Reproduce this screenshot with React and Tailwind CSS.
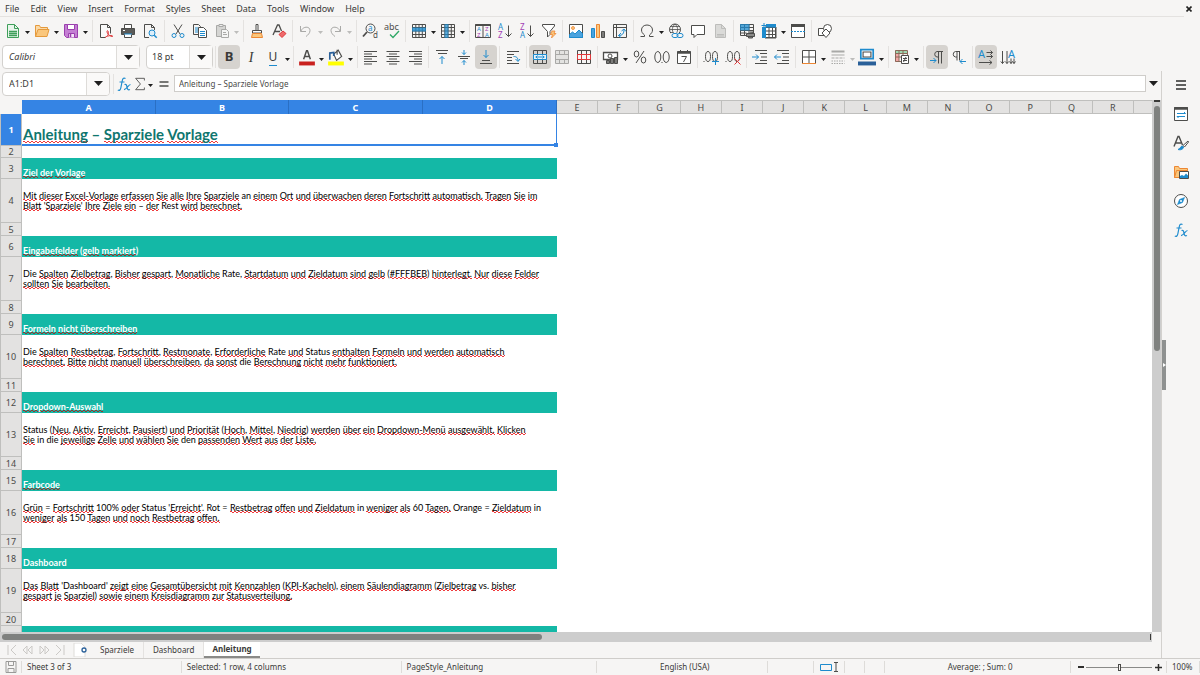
import React, { useState } from "react";

const DARK = "#4d4d4b";
const BLUE = "#1e8bcd";
const PURPLE = "#a33fb5";
const ORANGE = "#ed8733";
const RED = "#e0383a";
const GRAY = "#a9a9a7";

const Icon = ({ children, size = 16, stroke = DARK }) => (
  <svg
    width={size}
    height={size}
    viewBox="0 0 16 16"
    fill="none"
    stroke={stroke}
    strokeWidth="1"
    className="shrink-0 overflow-visible"
    aria-hidden="true"
  >
    {children}
  </svg>
);

const Glyph = ({ x, y, size, fill = DARK, children }) => (
  <text x={x} y={y} fontSize={size} fill={fill} stroke="none" fontFamily="Noto Sans, sans-serif">
    {children}
  </text>
);

const Caret = ({ color = "#1f1f1f", big }) => (
  <svg width={big ? 9 : 5} height={big ? 5 : 3} viewBox="0 0 10 6" preserveAspectRatio="none" aria-hidden="true">
    <path d="M0 0h10L5 6z" fill={color} />
  </svg>
);

const icons = {
  newDoc: (
    <Icon stroke="#3f9f5a">
      <path d="M2.5 1.5h7l4 4v9h-11z" fill="#e9f6ec" />
      <path d="M9.5 1.5v4h4" />
      <path d="M4 8.5h8M4 10.5h8M4 12.5h8" strokeWidth="1.3" />
    </Icon>
  ),
  open: (
    <Icon stroke="#e59a3c">
      <path d="M1.5 13.5v-11h4l1 2h7v2" fill="#fbd9a6" />
      <path d="M1.5 13.5l2.5-7h11l-2 7z" fill="#fac77d" />
    </Icon>
  ),
  save: (
    <Icon stroke="#9b3fae">
      <path d="M1.5 1.5h13v13h-11l-2-2z" fill="#c47fd3" />
      <path d="M4.5 1.5h7v5h-7z" fill="#fff" />
      <path d="M5.5 14.5v-4h6v4" fill="#f4e4f7" />
      <path d="M7.5 11v3" strokeWidth="1.5" />
    </Icon>
  ),
  pdf: (
    <Icon>
      <path d="M2.5 14.5v-13h7l3 3v6M2.5 14.5h5" fill="#fafafa" />
      <path d="M9.5 1.5v3h3" />
      <path d="M7 14.5c3-1.5 4-4 3-6.5-.7-1-1.5.3-.6 2 .9 1.7 3 3.5 5.1 3.5 1.2-.8-2-1.500-5.3-.2" stroke={RED} />
    </Icon>
  ),
  print: (
    <Icon>
      <path d="M4.5 5V1.5h7V5" fill="#fff" />
      <path d="M1.5 5.5h13v6h-13z" fill="#5a5a58" />
      <path d="M4 11.5h8" stroke={BLUE} strokeWidth="2" />
      <path d="M4.5 11.5v3h7v-3" fill="#fff" />
      <path d="M3 7.5h2" stroke="#fff" />
    </Icon>
  ),
  preview: (
    <Icon>
      <path d="M7 14.5H2.5v-13h7l3 3v2.500M9.5 1.5v3h3" />
      <circle cx="10" cy="10" r="3" stroke={BLUE} fill="#dceefa" />
      <path d="M12.2 12.2l2.5 2.5" stroke={BLUE} strokeWidth="1.5" />
    </Icon>
  ),
  cut: (
    <Icon>
      <path d="M4 1.5l6 9.5M12 1.5l-6 9.5" />
      <circle cx="4" cy="12.5" r="2" stroke={BLUE} />
      <circle cx="12" cy="12.5" r="2" stroke={BLUE} />
    </Icon>
  ),
  copy: (
    <Icon>
      <path d="M7 11.5H1.5v-10h5l2 2v1" />
      <path d="M3 5h3M3 7h3M3 9h3" stroke={BLUE} />
      <path d="M6.5 4.5h5l3 3v7h-8z" fill="#fff" />
      <path d="M8 8.5h5M8 10.5h5M8 12.5h5" stroke={BLUE} />
    </Icon>
  ),
  paste: (
    <Icon stroke={GRAY}>
      <path d="M2.5 2.5h9v11h-9z" fill="#d5d5d3" />
      <path d="M5 1.5h4v2H5z" fill="#eee" />
      <path d="M7.5 6.5h5l2 2v6h-7z" fill="#f5f5f4" />
      <path d="M9 9.5h3M9 11.5h4" />
    </Icon>
  ),
  brush: (
    <Icon>
      <path d="M7 1.5h2v6H7zM3.5 7.5h9v2.5h-9z" fill="#fff" />
      <path d="M3.5 10.5h9l1 4h-11z" fill="#fac77d" stroke={ORANGE} />
    </Icon>
  ),
  clear: (
    <Icon>
      <path d="M2 12L6.5 2h1.5L10.5 8M4 8.500h5" strokeWidth="1.3" />
      <path d="M8 11.5l4-3.5 3 2.5-4 4z" fill="#ee6a6c" stroke={RED} />
    </Icon>
  ),
  undo: (
    <Icon stroke={GRAY}>
      <path d="M2.5 3v5.5H8M3 8c2-5 9-5 9-.5 0 2.5-2 4.5-4 6" />
    </Icon>
  ),
  redo: (
    <Icon stroke={GRAY}>
      <path d="M13.5 3v5.5H8M13 8c-2-5-9-5-9-.5 0 2.5 2 4.5 4 6" />
    </Icon>
  ),
  find: (
    <Icon>
      <circle cx="8.5" cy="5.5" r="4.500" />
      <path d="M5 9l-4 4.5" strokeWidth="1.8" />
      <Glyph x="6" y="8" size="8" fill={BLUE}>a</Glyph>
      <Glyph x="11" y="15" size="8">d</Glyph>
    </Icon>
  ),
  spell: (
    <Icon>
      <Glyph x="0" y="7" size="9">abc</Glyph>
      <path d="M6 11.5l3 3 6-6.5" stroke="#2fa866" strokeWidth="1.3" />
    </Icon>
  ),
  row: (
    <Icon>
      <path d="M1.5 1.5h13v13h-13zM1.5 4.5h13M1.5 8h13M1.5 11.5h13M4.8 1.5v13M8 1.5v13M11.3 1.5v13" />
      <path d="M1 4.5h14v4H1z" fill={BLUE} stroke="none" opacity=".8" />
    </Icon>
  ),
  col: (
    <Icon>
      <path d="M1.5 1.5h13v13h-13zM1.5 4.5h13M1.5 8h13M1.5 11.5h13M4.8 1.5v13M8 1.5v13M11.3 1.5v13" />
      <path d="M4.5 1H8.500v14h-4z" fill={BLUE} stroke="none" opacity=".7" />
    </Icon>
  ),
  sort: (
    <Icon>
      <path d="M.5 1.5h15v13H.5zM8 1.5v13" />
      <path d="M.5 2h15" strokeWidth="2" />
      <Glyph x="2" y="8" size="6" fill={BLUE}>A</Glyph>
      <Glyph x="2" y="14" size="6" fill={PURPLE}>Z</Glyph>
      <Glyph x="10" y="8" size="6" fill={PURPLE}>Z</Glyph>
      <Glyph x="10" y="14" size="6" fill={BLUE}>A</Glyph>
    </Icon>
  ),
  sortAsc: (
    <Icon>
      <Glyph x="1" y="7" size="8" fill={BLUE}>A</Glyph>
      <Glyph x="1" y="15" size="8" fill={PURPLE}>Z</Glyph>
      <path d="M11.5 2.5v11M8.5 10.5l3 3 3-3" />
    </Icon>
  ),
  sortDesc: (
    <Icon>
      <Glyph x="1" y="7" size="8" fill={PURPLE}>Z</Glyph>
      <Glyph x="1" y="15" size="8" fill={BLUE}>A</Glyph>
      <path d="M11.5 2.5v11M8.5 10.5l3 3 3-3" />
    </Icon>
  ),
  filter: (
    <Icon>
      <path d="M1.5 1.5h12v1.5L9 8.5v3L6.5 14V8.5L1.5 3z" fill="#fff" />
      <path d="M11 8h3l-1 2.5h2L10.5 15l1-3.5H9.5z" fill="#fac77d" stroke={ORANGE} strokeWidth=".8" />
    </Icon>
  ),
  image: (
    <Icon>
      <path d="M1.5 1.5h13v13h-13z" fill="#fff" />
      <path d="M1.5 14.5v-3l3-2.5 2.5 2 4-4 3.5 3.5v4z" fill="#4aa3df" stroke={BLUE} />
      <circle cx="5" cy="5" r="1.5" fill="#fac77d" stroke={ORANGE} strokeWidth=".8" />
    </Icon>
  ),
  chart: (
    <Icon>
      <path d="M1.5 5.5h3v9h-3z" fill="#4aa3df" stroke={BLUE} />
      <path d="M6.5 1.5h3v13h-3z" fill="#fac77d" stroke={ORANGE} />
      <path d="M11.5 8.5h3v6h-3z" fill="#7c7c7a" />
    </Icon>
  ),
  pivot: (
    <Icon>
      <path d="M1.5 1.5h13v13h-13zM1.5 4.5h13M4.5 1.5v13" />
      <path d="M6.5 12.5c4 0 5.5-2 5.5-6M9.5 8L12 6l2 2.5M9 10l-2.5 2.5L9 14.5" stroke={BLUE} />
    </Icon>
  ),
  omega: (
    <Icon>
      <path d="M1.5 13.5h4v-1.5C3.5 10.5 2.5 9 2.5 7c0-3 2.3-5 5.5-5s5.5 2 5.5 5c0 2-1 3.5-3 5v1.5h4" />
    </Icon>
  ),
  link: (
    <Icon>
      <circle cx="7" cy="6.5" r="5.5" />
      <path d="M1.5 6.5h11M7 1c-4 4-3 8 0 11M7 1c4 4 3 8 0 11M2.5 3.5h9M2.5 9.5h3" strokeWidth=".8" />
      <path d="M3 10h13v5H3z" fill="#f6f5f4" stroke="none" />
      <rect x="4" y="10.5" width="6" height="4" rx="2" stroke={BLUE} />
      <rect x="9" y="10.5" width="6" height="4" rx="2" stroke={BLUE} />
    </Icon>
  ),
  comment: (
    <Icon>
      <path d="M1.5 2.5h13v9H7l-3 3v-3H1.5z" fill="#fff" />
    </Icon>
  ),
  headerFooter: (
    <Icon stroke="#bdbdbb">
      <path d="M3.5 1.5h6l4 4v9h-10z" fill="#dadad8" />
      <path d="M5 11.5h7M5 13h7M9.5 1.5v4h4" />
    </Icon>
  ),
  printArea: (
    <Icon>
      <path d="M1.5 1.5h13v11h-13zM1.5 4.5h13M1.5 7.5h13M1.5 10h6M5.5 1.5v11M10 1.5v6" />
      <path d="M1 1h9.500v6.500H1z" fill={BLUE} stroke="none" opacity=".75" />
      <path d="M7.5 10.5h8v3h-8zM9 9h5v1.5M9.5 13.5v1.5h4v-1.5" fill="#8a8a88" />
    </Icon>
  ),
  freeze: (
    <Icon>
      <path d="M4 4h11v11H4z" fill="#fff" />
      <path d="M4.5 4.5h10v10h-10zM4.5 8h10M4.5 11.5h10M8 4.5v10M11.5 4.5v10" />
      <path d="M1 4h4v11H1zM5 1h10v3.500H5z" fill={BLUE} stroke="none" />
      <path d="M3 0v5M.5 2.5h5" stroke={BLUE} />
    </Icon>
  ),
  split: (
    <Icon>
      <path d="M1.5 2.5h13v12h-13z" fill="#fff" />
      <path d="M1 2.5h14" strokeWidth="3" />
      <path d="M1 8.5h14" stroke={BLUE} strokeDasharray="2 1" />
    </Icon>
  ),
  shapes: (
    <Icon>
      <path d="M1.5 5.5h7v7h-7z" fill="#fff" />
      <circle cx="10.5" cy="5.5" r="4" fill="#fff" />
      <path d="M9 6l4 4-4 4.5-4-4.5z" fill="#fff" />
    </Icon>
  ),
  fontColor: (
    <Icon size={18}>
      <path d="M5 10L7.6 2.5h.8L11 10M6 7.5h4" strokeWidth="1.3" />
      <path d="M1 12h14v3.5H1z" fill="#c9211e" stroke="none" />
    </Icon>
  ),
  highlight: (
    <Icon size={18}>
      <path d="M1 12h14v3.5H1z" fill="#ffff00" stroke="none" />
      <path d="M6 5.5l4-3.5 3 5.5-4.5 3.5zM9 6V1.5" fill="#fff" />
      <path d="M2.5 10.5V4.5L6 4v3" stroke="#2a6099" strokeWidth="1.5" />
    </Icon>
  ),
  alignLeft: (
    <Icon><path d="M1 2.5h13M1 5h8M1 7.5h13M1 10h8M1 12.5h13M1 15h8" /></Icon>
  ),
  alignCenter: (
    <Icon><path d="M1.5 2.5h13M4 5h8M1.5 7.5h13M4 10h8M1.5 12.5h13M4 15h8" /></Icon>
  ),
  alignRight: (
    <Icon><path d="M2 2.5h13M7 5h8M2 7.5h13M7 10h8M2 12.5h13M7 15h8" /></Icon>
  ),
  alignTop: (
    <Icon>
      <path d="M2 1.5h12M4 4.5h9" />
      <path d="M8 15V7.5M5.5 10L8 7.5l2.5 2.5" stroke={BLUE} />
    </Icon>
  ),
  alignMiddle: (
    <Icon>
      <path d="M2 7.5h12M4 9.5h8" />
      <path d="M8 1v4.5M6 3.5l2 2 2-2M8 16v-4.5M6 13.5l2-2 2 2" stroke={BLUE} />
    </Icon>
  ),
  alignBottom: (
    <Icon>
      <path d="M4 11.5h8M2 14.5h12" />
      <path d="M8 1v7.5M5.5 6L8 8.5 10.5 6" stroke={BLUE} />
    </Icon>
  ),
  wrap: (
    <Icon>
      <path d="M2 2.5h12M2 5.5h7M2 8.5h5M2 11.5h5M2 14.5h12" />
      <path d="M8.500 7.5c3 0 4.5 1 4.5 4.5M10.5 10l2.5 2.5L15 10" stroke={BLUE} />
    </Icon>
  ),
  merge: (
    <Icon>
      <path d="M1.5 5.5v-4h13v4M1.5 10.5v4h13v-4M5.5 1.5v4M10.5 1.5v4M5.5 10.5v4M10.5 10.5v4" />
      <path d="M1.5 5.5h13v5h-13z" fill="#e6f3fb" stroke={BLUE} />
      <path d="M3.5 8h9M5.500 6.5L4 8l1.5 1.5M10.5 6.5L12 8l-1.5 1.5" stroke={BLUE} />
    </Icon>
  ),
  mergeCenter: (
    <Icon stroke={GRAY}>
      <path d="M1.5 1.5h13v13h-13z" fill="#e3e3e1" />
      <path d="M1.5 5.5h13M1.5 10.5h13M5.5 1.5v4M10.5 1.5v4M5.5 10.5v4M10.5 10.5v4" />
    </Icon>
  ),
  unmerge: (
    <Icon>
      <path d="M1.5 1.5h13v13h-13zM5.5 1.5v13M10.5 1.5v13" />
      <path d="M1.5 5.5h13v5h-13zM5.5 5.5v5M10.5 5.5v5" stroke={RED} />
    </Icon>
  ),
  currency: (
    <Icon>
      <path d="M.5 3.5h14v7H.5z" fill="#fff" strokeWidth="1.3" />
      <circle cx="7" cy="7" r="2" />
      <path d="M3.5 11.5h3v3h-3zM7.5 9.5h3v5h-3zM11.5 8.5h3v6h-3z" fill="#7c7c7a" />
    </Icon>
  ),
  percent: (
    <Icon>
      <ellipse cx="4.5" cy="5" rx="2.3" ry="3" />
      <ellipse cx="11.5" cy="11" rx="2.3" ry="3" />
      <path d="M12 2L4 14" />
    </Icon>
  ),
  number: (
    <Icon>
      <ellipse cx="3.8" cy="8" rx="3" ry="5.5" />
      <ellipse cx="12.2" cy="8" rx="3" ry="5.5" />
      <path d="M7.5 13.5h1" />
    </Icon>
  ),
  date: (
    <Icon>
      <path d="M1.5 2.5h13v12h-13z" fill="#fff" />
      <path d="M1.5 3.5h13" strokeWidth="2.5" />
      <path d="M4.5 1v3M11.5 1v3" />
      <path d="M5.5 7.5h5L7.5 13" />
    </Icon>
  ),
  addDecimal: (
    <Icon>
      <ellipse cx="5" cy="7.5" rx="2.5" ry="5" />
      <ellipse cx="12" cy="7.5" rx="2.5" ry="5" />
      <path d="M.5 12.5h1" />
      <path d="M9 12.5h7M12.5 9v7" stroke={BLUE} />
    </Icon>
  ),
  removeDecimal: (
    <Icon>
      <ellipse cx="5" cy="7.5" rx="2.5" ry="5" />
      <ellipse cx="12" cy="7.5" rx="2.5" ry="5" />
      <path d="M.5 12.5h1" />
      <path d="M9.5 9.5l6 6M15.5 9.5l-6 6" stroke={RED} />
    </Icon>
  ),
  indent: (
    <Icon>
      <path d="M3 1.5h12M8 4.5h7M9 8h6M8 11.5h7M3 14.5h12" />
      <path d="M0 8h6.5M4 5.5L6.5 8 4 10.5" stroke={BLUE} />
    </Icon>
  ),
  outdent: (
    <Icon>
      <path d="M3 1.5h12M8 4.5h7M9 8h6M8 11.5h7M3 14.5h12" />
      <path d="M7 8H.5M3 5.5L.5 8 3 10.5" stroke={BLUE} />
    </Icon>
  ),
  borders: (
    <Icon>
      <path d="M1.5 1.5h13v13h-13z" fill="#fff" />
      <path d="M8 1.5v13M1.5 8h13" />
      <path d="M1 14.5h14" stroke={ORANGE} />
    </Icon>
  ),
  borderStyle: (
    <Icon stroke={GRAY}>
      <path d="M1.5 2.5h13" strokeWidth="2" />
      <path d="M1.5 6h13" />
      <path d="M1.5 9h13" strokeDasharray="3 1" />
      <path d="M1.5 12h13M1.5 14.5h13" strokeDasharray="1.5 1" />
    </Icon>
  ),
  borderColor: (
    <Icon size={18}>
      <path d="M2.5 1.5h11v8h-11z" fill="#fff" stroke={BLUE} strokeWidth="1.5" />
      <path d="M4.5 3.5h7v4.5h-7z" />
      <path d="M0 12h16v3.5H0z" fill="#2a6099" stroke="none" />
    </Icon>
  ),
  conditional: (
    <Icon>
      <path d="M1 1h12v3H1z" fill="#9fd8b0" stroke="none" />
      <path d="M1 5h4v8H1z" fill="#f3a6a6" stroke="none" />
      <path d="M1.5 1.5h12v11h-12zM1.5 4.5h12M1.5 8h12M5 1.5v11M9 1.5v6" stroke="#8a6a5a" />
      <path d="M7.5 6.5h7v8h-7z" fill="#fff" />
      <path d="M9 9.5h4M9 11.5h4M12 8l-2.5 5" />
    </Icon>
  ),
  ltr: (
    <Icon>
      <path d="M14 2.5H8a2.8 2.8 0 000 5.5h1.5M9.5 2.5v12M12.5 2.5v12" />
      <path d="M1 11.5h6M4.5 9L7 11.5 4.5 14" stroke={BLUE} />
    </Icon>
  ),
  rtl: (
    <Icon>
      <path d="M9 2.5H4.5a2.8 2.8 0 000 5.5H6M6 2.5v9M8.5 2.5v9" />
      <path d="M15 12.5H9M11.5 10L9 12.5l2.5 2.5" stroke={BLUE} />
    </Icon>
  ),
  textHoriz: (
    <Icon>
      <Glyph x="0" y="9" size="11" fill={BLUE}>A</Glyph>
      <path d="M8.5 3.5h6M12.5 1.5l2 2-2 2M8.5 7.5h6M12.5 5.5l2 2-2 2M1 13.5h13M11.5 11.500l2.5 2-2.5 2" />
    </Icon>
  ),
  textVert: (
    <Icon>
      <Glyph x="8" y="9" size="11" fill={BLUE}>A</Glyph>
      <path d="M2.5 2v12.5M.8 12.5l1.7 2 1.7-2M7 2v12.5M5.3 12.5L7 14.5l1.7-2M11 9.5v5M14 9.5v5M9.5 12.5l1.5 2 1.5-2 1.5 2 1.5-2" />
    </Icon>
  ),
  fx: (
    <Icon stroke={BLUE}>
      <path d="M9.5 2.5c-1.5-1-2.8-.3-3.2 2L4.8 12c-.4 2.2-1.500 2.8-3 2M3.5 6h5" strokeWidth="1.2" />
      <path d="M8.5 8.5c2-.6 2.2 1 2.6 3 .3 2 1 2.8 2.9 2M14.5 8.5c-2 0-4 5-6.5 5.2" strokeWidth="1.2" />
    </Icon>
  ),
  sigma: (
    <Icon size={14}><path d="M13 4V1.5H3L8.5 8 3 14.5h10V12" /></Icon>
  ),
  equals: (
    <Icon><path d="M3.5 6h9M3.5 10h9" strokeWidth="1.4" /></Icon>
  ),
  burger: (
    <Icon stroke="#2e2e2c"><path d="M3 4h10M3 8h10M3 12h10" strokeWidth="1.3" /></Icon>
  ),
  properties: (
    <Icon>
      <path d="M1.5 1.5h13v13h-13z" fill="#fff" />
      <path d="M1 2.5h14" strokeWidth="2.5" />
      <path d="M4 7.5h8.5L11 6M12 10.5H4L5.5 12" stroke={BLUE} />
    </Icon>
  ),
  styles: (
    <Icon>
      <path d="M1 11.5L5 1.5h1L9.5 10M2.5 8H8" strokeWidth="1.4" />
      <path d="M15 6l-5 4.5 1.5 1.5L15.5 7z" fill="#fff" />
      <path d="M5 14.5c2 .5 5 .5 5.5-2.5L9 11c-1.5.5-1.5 2.5-4 3.5z" fill={BLUE} stroke={BLUE} />
    </Icon>
  ),
  gallery: (
    <Icon stroke={ORANGE}>
      <path d="M1.5 13.5v-11h4l1 2h8v2H4.500z" fill="#fac77d" />
      <path d="M1.5 13.5l2-7h11v7z" fill="#fac77d" />
      <path d="M6.5 7.5h9v7h-9z" fill="#fff" stroke={DARK} />
      <path d="M7 14v-2l2-1 2 1 2-2.5 2 2V14z" fill={BLUE} stroke="none" />
    </Icon>
  ),
  navigator: (
    <Icon>
      <circle cx="8" cy="8" r="6.5" fill="#fff" />
      <path d="M11.5 4.5l-2 5-5 2 2-5z" fill={BLUE} stroke={BLUE} strokeWidth=".6" />
      <circle cx="8" cy="8" r="1" fill="#fff" stroke="none" />
    </Icon>
  ),
};

const Tool = ({ name, active }) => (
  <button
    aria-label={name}
    className={`flex w-[22px] h-6 shrink-0 items-center justify-center rounded ${active ? "bg-[#d6d3cf]" : ""}`}
  >
    {icons[name]}
  </button>
);

const Drop = ({ disabled }) => (
  <button aria-label="More options" className="flex w-[7px] h-6 shrink-0 items-center justify-center pt-1">
    <Caret color={disabled ? "#bdbdbb" : "#1f1f1f"} />
  </button>
);

const Sep = () => <span className="mx-[2px] h-[22px] w-px shrink-0 bg-[#e4e2e0]" />;
const WideSep = () => <span className="ml-[3px] mr-[2px] h-[22px] w-px shrink-0 bg-[#e4e2e0]" />;

const menus = ["File", "Edit", "View", "Insert", "Format", "Styles", "Sheet", "Data", "Tools", "Window", "Help"];

const sections = [
  {
    title: "Ziel der Vorlage",
    lines: [
      "Mit dieser Excel-Vorlage erfassen Sie alle Ihre Sparziele an einem Ort und überwachen deren Fortschritt automatisch. Tragen Sie im",
      "Blatt 'Sparziele' Ihre Ziele ein – der Rest wird berechnet.",
    ],
  },
  {
    title: "Eingabefelder (gelb markiert)",
    lines: [
      "Die Spalten Zielbetrag, Bisher gespart, Monatliche Rate, Startdatum und Zieldatum sind gelb (#FFFBEB) hinterlegt. Nur diese Felder",
      "sollten Sie bearbeiten.",
    ],
  },
  {
    title: "Formeln nicht überschreiben",
    lines: [
      "Die Spalten Restbetrag, Fortschritt, Restmonate, Erforderliche Rate und Status enthalten Formeln und werden automatisch",
      "berechnet. Bitte nicht manuell überschreiben, da sonst die Berechnung nicht mehr funktioniert.",
    ],
  },
  {
    title: "Dropdown-Auswahl",
    lines: [
      "Status (Neu, Aktiv, Erreicht, Pausiert) und Priorität (Hoch, Mittel, Niedrig) werden über ein Dropdown-Menü ausgewählt. Klicken",
      "Sie in die jeweilige Zelle und wählen Sie den passenden Wert aus der Liste.",
    ],
  },
  {
    title: "Farbcode",
    lines: [
      "Grün = Fortschritt 100% oder Status 'Erreicht'. Rot = Restbetrag offen und Zieldatum in weniger als 60 Tagen. Orange = Zieldatum in",
      "weniger als 150 Tagen und noch Restbetrag offen.",
    ],
  },
  {
    title: "Dashboard",
    lines: [
      "Das Blatt 'Dashboard' zeigt eine Gesamtübersicht mit Kennzahlen (KPI-Kacheln), einem Säulendiagramm (Zielbetrag vs. bisher",
      "gespart je Sparziel) sowie einem Kreisdiagramm zur Statusverteilung.",
    ],
  },
];

// words the English dictionary accepts
const known = ["an", "Rest", "Die", "die", "Rate", "Status", "in", "den", "Rot", "Orange", "vs", "Dashboard"];

const squiggle =
  "bg-[repeating-linear-gradient(90deg,#f0393b_0_2px,transparent_2px_4px),repeating-linear-gradient(90deg,transparent_0_2px,#f0393b_2px_4px)] bg-[length:100%_1px] bg-[position:0_calc(100%-1px),0_100%] bg-no-repeat";
const darkSquiggle =
  "bg-[repeating-linear-gradient(90deg,#9c2f2c_0_2px,transparent_2px_4px),repeating-linear-gradient(90deg,transparent_0_2px,#9c2f2c_2px_4px)] bg-[length:100%_1px] bg-[position:0_calc(100%-1px),0_100%] bg-no-repeat";

const Spelled = ({ text, dark }) =>
  text.split(/([\s'(),]+)/).map((part, i) => {
    const word = part.replace(/\.$/, "");
    const ok = !/[A-Za-zÄÖÜäöü#]/.test(part) || known.includes(word);
    return ok ? part : <span key={i} className={dark ? darkSquiggle : squiggle}>{part}</span>;
  });

const letters = "EFGHIJKLMNOPQR".split("");

const RowHead = ({ n, active }) => (
  <th
    scope="row"
    className={`border-b border-l border-r border-[#bfbfbd] p-0 text-center align-middle font-['Noto_Sans',sans-serif] text-[9px] leading-none ${
      active ? "bg-[#3584e4] font-bold text-white" : "bg-[#e3e2e1] font-normal text-[#4a4a48]"
    }`}
  >
    {n}
  </th>
);

const Sheet = () => (
  <table className="w-full table-fixed border-separate border-spacing-0 font-['Noto_Sans',sans-serif]">
    <colgroup>
      <col className="w-[22px]" />
      <col className="w-[134px]" />
      <col className="w-[133px]" />
      <col className="w-[134px]" />
      <col className="w-[134px]" />
      {letters.map((l) => <col key={l} />)}
      <col className="w-[18px]" />
    </colgroup>
    <thead>
      <tr className="h-[14px] text-[9px] leading-none text-[#4a4a48]">
        <td className="bg-[#f6f5f4] p-0" />
        {["A", "B", "C", "D"].map((l) => (
          <th key={l} scope="col" className="border-r border-[#2a6fc4] bg-[#3584e4] p-0 font-bold text-white">{l}</th>
        ))}
        {letters.map((l) => (
          <th key={l} scope="col" className="border-t border-r border-b border-[#bfbfbd] bg-[#e3e2e1] p-0 font-normal">{l}</th>
        ))}
        <td className="border-t border-b border-[#bfbfbd] bg-[#e3e2e1] p-0" />
      </tr>
    </thead>
    <tbody className="font-['Lato','Noto_Sans',sans-serif] text-[9px] leading-[10px] text-black">
      <tr className="h-[32px]">
        <RowHead n="1" active />
        <td colSpan="4" className="relative border-r border-b-2 border-[#3584e4] p-0 pl-px align-bottom text-[15px] leading-[19px] font-bold text-[#0f766e]">
          <Spelled text="Anleitung – Sparziele Vorlage" />
          <span className="absolute -right-[2px] -bottom-[3px] h-[4px] w-[4px] bg-[#3584e4]" />
        </td>
        <td colSpan="15" className="p-0" />
      </tr>
      <tr className="h-[12px]">
        <RowHead n="2" />
        <td colSpan="19" className="p-0" />
      </tr>
      {sections.map((s, i) => (
        <React.Fragment key={s.title}>
          <tr className="h-[21px]">
            <RowHead n={3 + i * 3} />
            <td colSpan="4" className="bg-[#14b8a6] p-0 pl-px align-bottom leading-[12px] font-bold text-white">
              <Spelled text={s.title} dark />
            </td>
            <td colSpan="15" className="p-0" />
          </tr>
          <tr className="h-[44px]">
            <RowHead n={4 + i * 3} />
            <td colSpan="4" className="p-0 pl-px align-middle whitespace-nowrap">
              {s.lines.map((l) => <div key={l}><Spelled text={l} /></div>)}
            </td>
            <td colSpan="15" className="p-0" />
          </tr>
          <tr className="h-[13px]">
            <RowHead n={5 + i * 3} />
            <td colSpan="19" className="p-0" />
          </tr>
        </React.Fragment>
      ))}
      <tr className="h-[21px]">
        <RowHead n="" />
        <td colSpan="4" className="bg-[#14b8a6] p-0" />
        <td colSpan="15" className="p-0" />
      </tr>
    </tbody>
  </table>
);

const App = () => {
  const [tab, setTab] = useState("Anleitung");
  const [zoom, setZoom] = useState(50);

  return (
    <div className="flex h-screen flex-col overflow-hidden bg-[#f6f5f4] font-['Noto_Sans',sans-serif] text-[8px] text-[#3a3a38]">
      <header className="mr-4 flex h-[17px] shrink-0 items-center border-b border-[#e4e2e0] pt-px text-[9px]">
        <nav className="flex gap-px">
          {menus.map((m) => (
            <button key={m} className="px-[5px]">{m}</button>
          ))}
        </nav>
        <button aria-label="Close" className="-mr-2 ml-auto">
          <svg width="6" height="6" viewBox="0 0 6 6" aria-hidden="true">
            <path d="M.5.5l5 5M5.5.5l-5 5" stroke="#222" strokeWidth="1.6" />
          </svg>
        </button>
      </header>

      <div className="flex h-[27px] shrink-0 items-center pl-[2px]">
        <Tool name="newDoc" /><Drop />
        <Tool name="open" /><Drop />
        <Tool name="save" /><Drop />
        <WideSep />
        <Tool name="pdf" /><Tool name="print" /><Tool name="preview" />
        <WideSep />
        <Tool name="cut" /><Tool name="copy" /><Tool name="paste" /><Drop disabled />
        <WideSep />
        <Tool name="brush" /><Tool name="clear" />
        <Sep />
        <Tool name="undo" /><Drop disabled />
        <Tool name="redo" /><Drop disabled />
        <WideSep />
        <Tool name="find" /><Tool name="spell" />
        <Sep />
        <Tool name="row" /><Drop />
        <Tool name="col" /><Drop />
        <WideSep />
        <Tool name="sort" /><Tool name="sortAsc" /><Tool name="sortDesc" /><Tool name="filter" />
        <Sep />
        <Tool name="image" /><Tool name="chart" /><Tool name="pivot" />
        <Sep />
        <Tool name="omega" /><Drop />
        <Tool name="link" /><Tool name="comment" /><Tool name="headerFooter" />
        <Sep />
        <Tool name="printArea" /><Tool name="freeze" /><Drop /><Tool name="split" />
        <Sep />
        <Tool name="shapes" />
      </div>

      <div className="flex h-[27px] shrink-0 items-center pb-px pl-[2px]">
        <label className="mr-[6px] flex h-6 w-[138px] items-center rounded border border-[#d3d1ce] bg-white">
          <select aria-label="Font name" className="h-full flex-1 appearance-none pl-[6px] text-[9px] italic outline-none">
            <option>Calibri</option>
          </select>
          <span className="flex h-full w-[23px] items-center justify-center border-l border-[#dedcd9] bg-[#faf9f8]"><Caret big /></span>
        </label>
        <label className="flex h-6 w-[67px] items-center rounded border border-[#d3d1ce] bg-white">
          <select aria-label="Font size" className="h-full flex-1 appearance-none pl-[5px] text-[9px] outline-none">
            <option>18 pt</option>
          </select>
          <span className="flex h-full w-[23px] items-center justify-center border-l border-[#dedcd9] bg-[#faf9f8]"><Caret big /></span>
        </label>
        <Sep />
        <button aria-label="Bold" className="h-6 w-[22px] rounded bg-[#d6d3cf] text-[13px] font-bold">B</button>
        <button aria-label="Italic" className="h-6 w-[22px] font-['Liberation_Serif',serif] text-[14px] italic">I</button>
        <button aria-label="Underline" className="h-6 w-[22px] text-[12px]">
          <span className="border-b border-[#1e8bcd]">U</span>
        </button>
        <Drop />
        <Sep />
        <Tool name="fontColor" /><Drop />
        <Tool name="highlight" /><Drop />
        <WideSep />
        <Tool name="alignLeft" /><Tool name="alignCenter" /><Tool name="alignRight" />
        <Sep />
        <Tool name="alignTop" /><Tool name="alignMiddle" /><Tool name="alignBottom" active />
        <Sep />
        <Tool name="wrap" />
        <Sep />
        <Tool name="merge" active /><Tool name="mergeCenter" /><Tool name="unmerge" />
        <Sep />
        <Tool name="currency" /><Drop />
        <Tool name="percent" /><Tool name="number" /><Tool name="date" />
        <Sep />
        <Tool name="addDecimal" /><Tool name="removeDecimal" />
        <Sep />
        <Tool name="indent" /><Tool name="outdent" />
        <Sep />
        <Tool name="borders" /><Drop />
        <Tool name="borderStyle" /><Drop disabled />
        <Tool name="borderColor" /><Drop />
        <WideSep />
        <Tool name="conditional" /><Drop />
        <WideSep />
        <Tool name="ltr" active /><Tool name="rtl" />
        <Sep />
        <Tool name="textHoriz" active /><Tool name="textVert" />
      </div>

      <div className="flex min-h-0 flex-1">
        <main className="flex min-w-0 flex-1 flex-col border-r border-[#d3d1ce]">
          <div className="flex h-[29px] shrink-0 items-center pb-[4px] pl-[2px]">
            <div className="flex h-6 w-[108px] items-center overflow-hidden rounded border border-[#d3d1ce] bg-white">
              <input aria-label="Name box" defaultValue="A1:D1" className="h-full min-w-0 flex-1 pl-[6px] text-[9px] outline-none" />
              <button aria-label="Names" className="flex h-full w-[23px] items-center justify-center border-l border-[#dedcd9] bg-[#faf9f8]">
                <Caret big />
              </button>
            </div>
            <span className="ml-[3px] h-5 w-px bg-[#e4e2e0]" />
            <button aria-label="Function wizard" className="ml-[2px]">{icons.fx}</button>
            <button aria-label="Sum" className="ml-px">{icons.sigma}</button>
            <Drop />
            <button aria-label="Formula" className="mx-[2px]">{icons.equals}</button>
            <input
              aria-label="Input line"
              defaultValue="Anleitung – Sparziele Vorlage"
              className="h-[17px] min-w-0 flex-1 border border-[#cfcdca] bg-white px-1 text-[8px] text-[#4a4a48] outline-none"
            />
            <button aria-label="Expand formula bar" className="mx-[3px]"><Caret big /></button>
          </div>

          <div className="flex min-h-0 flex-1">
            <div className="min-w-0 flex-1 overflow-hidden bg-white"><Sheet /></div>
            <div className="flex w-[9px] shrink-0 flex-col items-center bg-[#cdcdcd]">
              <span className="mb-1 h-[2px] w-[6px] bg-[#3a3a38]" />
              <span className="h-[46%] w-[6px] rounded-full bg-[#7f817f]" />
            </div>
          </div>

          <div className="mr-[9px] flex h-[10px] shrink-0 items-center justify-between bg-[#cdcdcd] pr-px pl-[2px]">
            <span className="h-[6px] w-[47%] rounded-full bg-[#7f817f]" />
            <span className="h-[6px] w-px bg-[#3a3a38]" />
          </div>

          <div className="flex h-4 shrink-0 items-stretch">
            <div className="flex w-[68px] items-center justify-around pl-1">
              {["M2 1v10M10 1L5 6l5 5", "M5 2L1 6l4 4zM10 2L6 6l4 4z", "M2 2l4 4-4 4zM7 2l4 4-4 4z", "M10 1v10M2 1l5 5-5 5"].map((d) => (
                <button key={d} aria-label="Scroll sheets">
                  <svg width="14" height="12" viewBox="0 0 12 12" fill="none" stroke="#cbc9c6" aria-hidden="true"><path d={d} /></svg>
                </button>
              ))}
            </div>
            <button aria-label="Add sheet" className="ml-[5px] flex w-[18px] items-center">
              <svg width="15" height="14" viewBox="0 0 15 14" aria-hidden="true">
                <path d="M1 0h7l4 4v10H1z" fill="#fff" stroke="#dedcd9" />
                <circle cx="11" cy="7" r="2" fill="#fff" stroke="#2a6099" strokeWidth="1.3" />
              </svg>
            </button>
            {["Sparziele", "Dashboard", "Anleitung"].map((t) => (
              <button
                key={t}
                onClick={() => setTab(t)}
                className={
                  t === tab
                    ? "border-b-2 border-[#8a8a88] bg-white px-2 leading-[14px] font-bold"
                    : "border-r border-[#e4e2e0] px-[9px]"
                }
              >
                {t}
              </button>
            ))}
          </div>
        </main>

        <aside className="flex w-[38px] shrink-0 items-center">
          <button aria-label="Collapse sidebar" className="flex h-[50px] w-[4px] items-center justify-center bg-[#8f9190]">
            <svg width="3" height="4" viewBox="0 0 3 4" aria-hidden="true"><path d="M0 0l3 2-3 2z" fill="#fff" /></svg>
          </button>
          <div className="flex flex-1 flex-col items-center gap-[13px] self-start pt-[6px] pr-[4px]">
            {["burger", "properties", "styles", "gallery", "navigator", "fx"].map((n) => (
              <button key={n} aria-label={n}>{icons[n]}</button>
            ))}
          </div>
        </aside>
      </div>

      <footer className="grid h-[17px] shrink-0 grid-cols-[22px_160fr_220fr_196fr_171fr_46px_31px_20px_20px_186fr_96px_33px] items-center border-t border-[#cfcdca] [&>*]:flex [&>*]:h-3 [&>*]:items-center [&>*]:border-r [&>*]:border-[#dedcd9] [&>*]:pl-[5px]">
        <span>
          <svg width="12" height="12" viewBox="0 0 12 12" fill="none" stroke="#9a9a98" aria-hidden="true">
            <path d="M1 .5h10v11H1zM3.5.5v4h5v-4M3 11.5v-4h6v4" />
          </svg>
        </span>
        <span>Sheet 3 of 3</span>
        <span>Selected: 1 row, 4 columns</span>
        <span>PageStyle_Anleitung</span>
        <span className="justify-center">English (USA)</span>
        <span />
        <span>
          <svg width="20" height="12" viewBox="0 0 20 12" fill="none" aria-hidden="true">
            <path d="M1.5 3.5h11v6h-11z" stroke={BLUE} />
            <path d="M15 1.5h4M17 1.5v9M15 10.5h4" stroke={DARK} />
          </svg>
        </span>
        <span />
        <span />
        <span className="justify-center">Average: ; Sum: 0</span>
        <span>
          <button aria-label="Zoom out" className="flex h-2 w-2 items-center justify-end"><span className="h-[2px] w-[6px] bg-[#2e2e2c]" /></button>
          <input
            type="range"
            aria-label="Zoom"
            value={zoom}
            onChange={(e) => setZoom(e.target.value)}
            className="mx-[2px] h-px min-w-0 flex-1 appearance-none bg-[#8a8a88] [&::-webkit-slider-thumb]:h-[7px] [&::-webkit-slider-thumb]:w-[3px] [&::-webkit-slider-thumb]:appearance-none [&::-webkit-slider-thumb]:border [&::-webkit-slider-thumb]:border-[#4a4a48] [&::-webkit-slider-thumb]:bg-[#f6f5f4]"
          />
          <button aria-label="Zoom in" className="mr-1 flex h-2 w-2 items-center justify-center">
            <svg width="7" height="7" viewBox="0 0 7 7" aria-hidden="true"><path d="M3.5 0v7M0 3.5h7" stroke="#2e2e2c" strokeWidth="1.5" /></svg>
          </button>
        </span>
        <span className="border-r-0">100%</span>
      </footer>
    </div>
  );
};

export default App;
